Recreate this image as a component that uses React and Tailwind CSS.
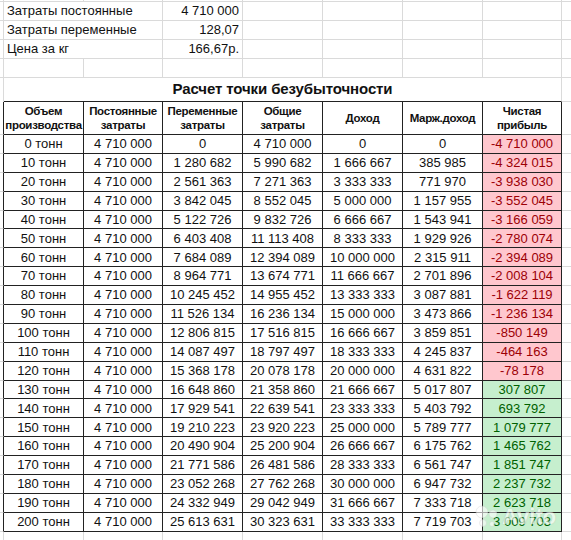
import React from 'react';

const cols = [80, 79, 80, 80, 80, 80, 79];

const rows = [
  ['0 тонн', '4 710 000', '0', '4 710 000', '0', '0', '-4 710 000'],
  ['10 тонн', '4 710 000', '1 280 682', '5 990 682', '1 666 667', '385 985', '-4 324 015'],
  ['20 тонн', '4 710 000', '2 561 363', '7 271 363', '3 333 333', '771 970', '-3 938 030'],
  ['30 тонн', '4 710 000', '3 842 045', '8 552 045', '5 000 000', '1 157 955', '-3 552 045'],
  ['40 тонн', '4 710 000', '5 122 726', '9 832 726', '6 666 667', '1 543 941', '-3 166 059'],
  ['50 тонн', '4 710 000', '6 403 408', '11 113 408', '8 333 333', '1 929 926', '-2 780 074'],
  ['60 тонн', '4 710 000', '7 684 089', '12 394 089', '10 000 000', '2 315 911', '-2 394 089'],
  ['70 тонн', '4 710 000', '8 964 771', '13 674 771', '11 666 667', '2 701 896', '-2 008 104'],
  ['80 тонн', '4 710 000', '10 245 452', '14 955 452', '13 333 333', '3 087 881', '-1 622 119'],
  ['90 тонн', '4 710 000', '11 526 134', '16 236 134', '15 000 000', '3 473 866', '-1 236 134'],
  ['100 тонн', '4 710 000', '12 806 815', '17 516 815', '16 666 667', '3 859 851', '-850 149'],
  ['110 тонн', '4 710 000', '14 087 497', '18 797 497', '18 333 333', '4 245 837', '-464 163'],
  ['120 тонн', '4 710 000', '15 368 178', '20 078 178', '20 000 000', '4 631 822', '-78 178'],
  ['130 тонн', '4 710 000', '16 648 860', '21 358 860', '21 666 667', '5 017 807', '307 807'],
  ['140 тонн', '4 710 000', '17 929 541', '22 639 541', '23 333 333', '5 403 792', '693 792'],
  ['150 тонн', '4 710 000', '19 210 223', '23 920 223', '25 000 000', '5 789 777', '1 079 777'],
  ['160 тонн', '4 710 000', '20 490 904', '25 200 904', '26 666 667', '6 175 762', '1 465 762'],
  ['170 тонн', '4 710 000', '21 771 586', '26 481 586', '28 333 333', '6 561 747', '1 851 747'],
  ['180 тонн', '4 710 000', '23 052 268', '27 762 268', '30 000 000', '6 947 732', '2 237 732'],
  ['190 тонн', '4 710 000', '24 332 949', '29 042 949', '31 666 667', '7 333 718', '2 623 718'],
  ['200 тонн', '4 710 000', '25 613 631', '30 323 631', '33 333 333', '7 719 703', '3 009 703'],
];

const headers = [
  ['Объем', 'производства'],
  ['Постоянные', 'затраты'],
  ['Переменные', 'затраты'],
  ['Общие', 'затраты'],
  ['Доход'],
  ['Марж.доход'],
  ['Чистая', 'прибыль'],
];

const inputs = [
  ['Затраты постоянные', '4 710 000'],
  ['Затраты переменные', '128,07'],
  ['Цена за кг', '166,67р.'],
  ['', ''],
];

function GridRow({ height, children }) {
  return (
    <div className="flex" style={{ height }}>
      <div className="w-[4px] shrink-0 border-r border-b border-[#dadada]" />
      {children}
      <div className="flex-1 border-b border-[#dadada]" />
    </div>
  );
}

function BlankRow() {
  return (
    <GridRow height={18.9}>
      {cols.map((w, i) => (
        <div key={i} className="shrink-0 border-r border-b border-[#dadada]" style={{ width: w }} />
      ))}
    </GridRow>
  );
}

export default function App() {
  return (
    <div className="relative w-[571px] h-[540px] overflow-hidden bg-white text-[#111] font-['Liberation_Sans',Arial,sans-serif]">
      <GridRow height={2}>
        {cols.map((w, i) => (
          <div key={i} className="shrink-0 border-r border-b border-[#dadada]" style={{ width: w }} />
        ))}
      </GridRow>

      {/* input block */}
      {inputs.map(([label, value], r) => (
        <GridRow key={r} height={18.9}>
          <div
            className={`w-[80px] shrink-0 border-b border-[#dadada] pl-[3px] text-[13px] leading-[18px] whitespace-nowrap ${label ? '' : 'border-r'}`}
          >
            {label}
          </div>
          <div className="w-[79px] shrink-0 border-r border-b border-[#dadada]" />
          <div className="w-[80px] shrink-0 border-r border-b border-[#dadada] pr-[3px] text-right text-[13px] leading-[18px] whitespace-nowrap">
            {value}
          </div>
          {cols.slice(3).map((w, i) => (
            <div key={i} className="shrink-0 border-r border-b border-[#dadada]" style={{ width: w }} />
          ))}
        </GridRow>
      ))}

      {/* title */}
      <div className="flex h-[24.4px]">
        <div className="w-[4px] shrink-0 border-r border-[#dadada]" />
        <div className="w-[558px] shrink-0 border-r border-[#dadada] border-b border-b-[#222] flex items-center justify-center text-[15px] font-bold tracking-[-0.1px]">
          Расчет точки безубыточности
        </div>
        <div className="flex-1 border-b border-[#dadada]" />
      </div>

      {/* header */}
      <div className="flex h-[33px]">
        <div className="w-[4px] shrink-0 border-r border-r-[#222] border-b border-b-[#dadada]" />
        {headers.map((lines, i) => (
          <div
            key={i}
            className="shrink-0 border-r border-b border-[#222] flex flex-col items-center justify-center text-[11.5px] leading-[14px] font-bold tracking-[-0.3px] whitespace-nowrap"
            style={{ width: cols[i] }}
          >
            {lines.map((l) => (
              <span key={l}>{l}</span>
            ))}
          </div>
        ))}
        <div className="flex-1 border-b border-[#dadada]" />
      </div>

      {/* data */}
      {rows.map((row, r) => (
        <div key={r} className="flex h-[18.9px]">
          <div className="w-[4px] shrink-0 border-r border-r-[#222] border-b border-b-[#dadada]" />
          {row.map((v, i) => {
            const last = i === 6;
            const neg = v.startsWith('-');
            const tone = last
              ? neg
                ? 'bg-[#ffc7ce] text-[#9c0006]'
                : 'bg-[#c6efce] text-[#006100]'
              : '';
            return (
              <div
                key={i}
                className={`shrink-0 border-r border-b border-[#222] flex items-center justify-center text-[13px] whitespace-nowrap ${tone}`}
                style={{ width: cols[i] }}
              >
                {v}
              </div>
            );
          })}
          <div className="flex-1 border-b border-[#dadada]" />
        </div>
      ))}

      <BlankRow />

      {/* watermark */}
      <div className="absolute left-[474px] top-[500px] flex items-center gap-[2px] opacity-60 pointer-events-none">
        <svg width="26" height="26" viewBox="0 0 26 26">
          <circle cx="8" cy="8" r="6" fill="#fff" stroke="#cfcfcf" strokeWidth="0.6" />
          <circle cx="19" cy="10" r="4" fill="#fff" stroke="#cfcfcf" strokeWidth="0.6" />
          <circle cx="9" cy="19" r="3.5" fill="#fff" stroke="#cfcfcf" strokeWidth="0.6" />
          <circle cx="18" cy="20" r="2.5" fill="#fff" stroke="#cfcfcf" strokeWidth="0.6" />
        </svg>
        <span className="text-[22px] font-bold text-white [text-shadow:0_0_1px_#9a9a9a]">Avito</span>
      </div>
    </div>
  );
}
